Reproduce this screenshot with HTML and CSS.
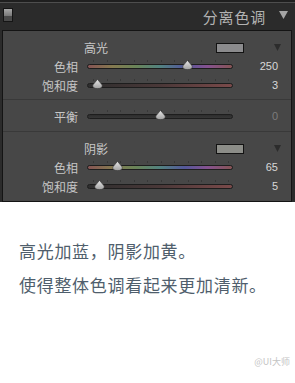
FILE: index.html
```html
<!DOCTYPE html>
<html lang="zh">
<head>
<meta charset="utf-8">
<link rel="stylesheet" href="styles.css">
</head>
<body>
<div class="frame">
  <div class="header">
    <div class="switch"><span class="sw-top"></span><span class="sw-bot"></span></div>
    <div class="title">分离色调</div>
    <svg class="hdr-tri" width="9" height="8" viewBox="0 0 9 8"><path d="M0 0H9L4.5 8Z" fill="#a4a4a4"/></svg>
  </div>
  <div class="panel">
    <div class="section first">
      <div class="sec-head">
        <span class="sec-title">高光</span>
        <span class="swatch hi"></span>
        <svg class="sec-tri" width="7" height="7" viewBox="0 0 7 7"><path d="M0 0H7L3.5 7Z" fill="#2c2c2c"/></svg>
      </div>
      <div class="row">
        <div class="label">色相</div>
        <div class="slider">
          <div class="ticks"><i></i><i></i><i></i><i></i><i></i><i></i><i></i><i></i><i></i><i></i><i></i></div>
          <div class="bar hue"></div>
          <svg class="thumb" style="left:94.5px" width="11" height="10" viewBox="0 0 11 10"><path d="M5.5 0.4L10.2 6Q10.6 9.6 5.5 9.6Q0.4 9.6 0.8 6Z"/></svg>
        </div>
        <div class="value">250</div>
      </div>
      <div class="row">
        <div class="label">饱和度</div>
        <div class="slider">
          <div class="ticks"><i></i><i></i><i></i><i></i><i></i><i></i><i></i><i></i><i></i><i></i><i></i></div>
          <div class="bar sat"></div>
          <svg class="thumb" style="left:4.5px" width="11" height="10" viewBox="0 0 11 10"><path d="M5.5 0.4L10.2 6Q10.6 9.6 5.5 9.6Q0.4 9.6 0.8 6Z"/></svg>
        </div>
        <div class="value">3</div>
      </div>
    </div>
    <div class="section mid">
      <div class="row">
        <div class="label">平衡</div>
        <div class="slider">
          <div class="ticks"><i></i><i></i><i></i><i></i><i></i><i></i><i></i><i></i><i></i><i></i><i></i></div>
          <div class="bar bal"></div>
          <svg class="thumb" style="left:68px" width="11" height="10" viewBox="0 0 11 10"><path d="M5.5 0.4L10.2 6Q10.6 9.6 5.5 9.6Q0.4 9.6 0.8 6Z"/></svg>
        </div>
        <div class="value dim">0</div>
      </div>
    </div>
    <div class="section last">
      <div class="sec-head">
        <span class="sec-title">阴影</span>
        <span class="swatch sh"></span>
        <svg class="sec-tri" width="7" height="7" viewBox="0 0 7 7"><path d="M0 0H7L3.5 7Z" fill="#2c2c2c"/></svg>
      </div>
      <div class="row">
        <div class="label">色相</div>
        <div class="slider">
          <div class="ticks"><i></i><i></i><i></i><i></i><i></i><i></i><i></i><i></i><i></i><i></i><i></i></div>
          <div class="bar hue"></div>
          <svg class="thumb" style="left:25px" width="11" height="10" viewBox="0 0 11 10"><path d="M5.5 0.4L10.2 6Q10.6 9.6 5.5 9.6Q0.4 9.6 0.8 6Z"/></svg>
        </div>
        <div class="value">65</div>
      </div>
      <div class="row">
        <div class="label">饱和度</div>
        <div class="slider">
          <div class="ticks"><i></i><i></i><i></i><i></i><i></i><i></i><i></i><i></i><i></i><i></i><i></i></div>
          <div class="bar sat"></div>
          <svg class="thumb" style="left:7px" width="11" height="10" viewBox="0 0 11 10"><path d="M5.5 0.4L10.2 6Q10.6 9.6 5.5 9.6Q0.4 9.6 0.8 6Z"/></svg>
        </div>
        <div class="value">5</div>
      </div>
    </div>
  </div>
</div>
<div class="caption">
  <p>高光加蓝，阴影加黄。</p>
  <p>使得整体色调看起来更加清新。</p>
</div>
<div class="watermark">@UI大师</div>
<svg width="0" height="0" style="position:absolute">
  <defs>
    <linearGradient id="tg" x1="0" y1="0" x2="0" y2="1">
      <stop offset="0" stop-color="#e8e8e8"/>
      <stop offset="1" stop-color="#a0a0a0"/>
    </linearGradient>
  </defs>
</svg>
</body>
</html>
```
FILE: styles.css
```css
* { box-sizing: border-box; margin: 0; padding: 0; }
html, body { background: #fff; }
body {
  width: 295px;
  height: 383px;
  overflow: hidden;
  font-family: "Noto Sans CJK SC", "Liberation Sans", sans-serif;
}
.frame {
  background: #2b2b2b;
  padding: 0 3px 0 2px;
}
.header {
  height: 30px;
  display: flex;
  align-items: center;
  margin: 0 -3px 0 -2px;
  padding: 3px 7px 0 3px;
  background: linear-gradient(#1f1f1f 0 2px, #4e4e4e 2px 3px, #2b2b2b 3px);
}
.switch {
  width: 10px;
  height: 14px;
  border: 1px solid #151515;
  display: flex;
  flex-direction: column;
  margin-bottom: 3px;
}
.sw-top { height: 7px; background: linear-gradient(#a8a8a8, #787878); }
.sw-bot { flex: 1; background: #4a4a4a; }
.title {
  margin-left: auto;
  font-size: 15px;
  line-height: 18px;
  color: #b3b3b3;
  letter-spacing: 0.8px;
  margin-right: 13px;
}
.hdr-tri { display: block; margin-bottom: 3px; }
.panel {
  background: #474747;
  border: 1px solid #141414;
}
.section.first { padding: 7px 0 4px; }
.section.mid { padding: 7px 0 5px; border-top: 1px solid #393939; }
.section.last { padding: 7px 0 5px; border-top: 1px solid #393939; }
.sec-head {
  height: 19px;
  display: flex;
  align-items: center;
  padding-left: 81px;
  padding-right: 10px;
}
.sec-title {
  font-size: 12px;
  color: #c8c8c8;
  line-height: 19px;
}
.swatch {
  margin-left: auto;
  width: 28px;
  height: 10px;
  border: 1px solid #121212;
}
.swatch.hi { background: #8b8b8d; }
.swatch.sh { background: #8c8d88; }
.sec-tri { display: block; margin-left: 30px; }
.row {
  height: 19px;
  display: grid;
  grid-template-columns: 84px 146px 45px;
  align-items: start;
}
.label {
  text-align: right;
  padding-right: 9px;
  font-size: 12px;
  line-height: 19px;
  color: #c6c6c6;
}
.slider {
  position: relative;
  height: 19px;
  padding-top: 3px;
}
.ticks {
  display: flex;
  justify-content: space-between;
  width: 136px;
  height: 2px;
  margin-left: 6px;
}
.ticks i { display: block; width: 1px; height: 2px; background: #383838; }
.bar {
  margin-top: 2px;
  height: 5px;
  border: 1px solid #1d1d1d;
  border-radius: 3px;
}
.bar.hue {
  background: linear-gradient(90deg, #865454, #857a50 17%, #6a8458 33%, #528280 50%, #54589a 67%, #865290 83%, #865454);
}
.bar.sat { background: linear-gradient(90deg, #2e2e2e, #4a3838 50%, #7a4a4a); }
.bar.bal { background: linear-gradient(#2d2d2d, #363636); }
.thumb {
  position: absolute;
  top: 3px;
  fill: url(#tg);
  stroke: #3a3a3a;
  stroke-width: 0.6;
}
.value {
  text-align: right;
  font-family: "Liberation Sans", sans-serif;
  font-size: 11px;
  line-height: 19px;
  color: #d8d8d8;
}
.value.dim { color: #7c7c7c; }
.caption {
  padding: 32px 0 0 19px;
  color: #4f5e6c;
  font-size: 17px;
  letter-spacing: 0.7px;
  line-height: 34px;
}
.watermark {
  margin-top: 54px;
  text-align: right;
  padding-right: 5px;
  font-size: 9px;
  line-height: 12px;
  color: #c4c4c4;
}
```
